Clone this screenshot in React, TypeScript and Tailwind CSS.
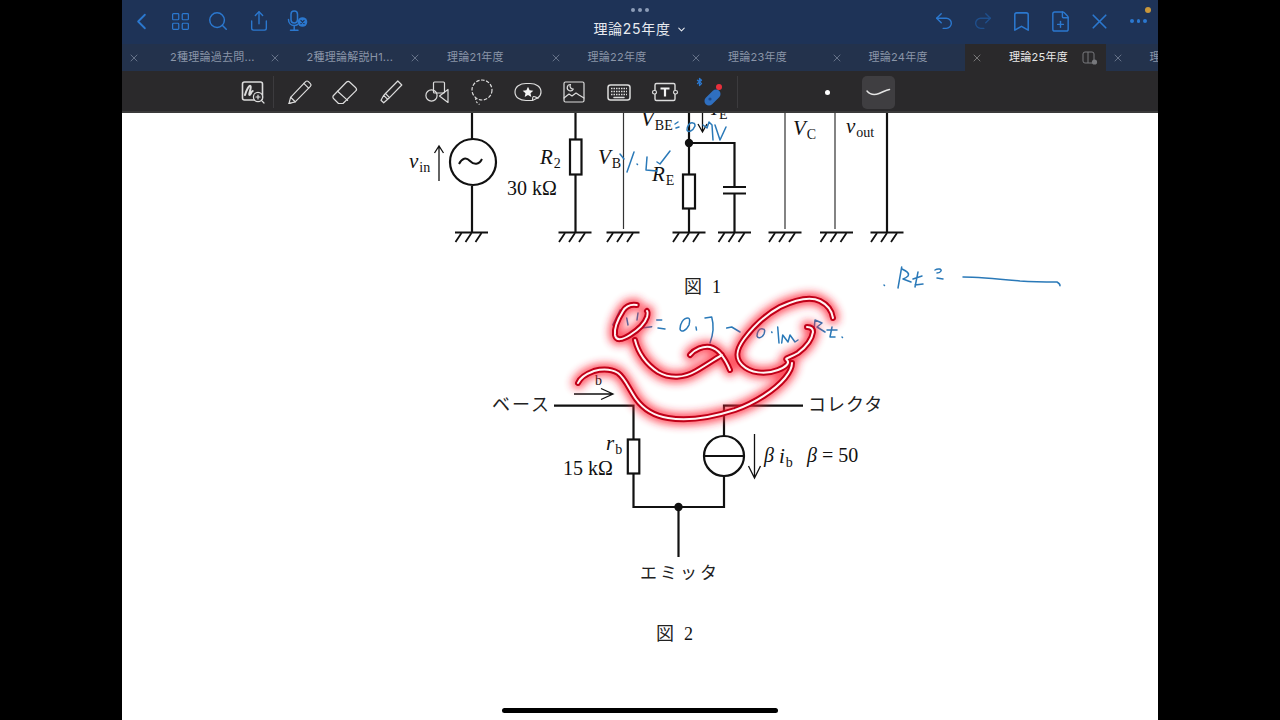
import { Bookmark, ChevronDown, ChevronLeft, FilePlus, LayoutGrid, Redo2, Search, Share, Undo2, X } from "lucide-react"

const tabs = [
  "2種理論過去問...",
  "2種理論解説H1...",
  "理論21年度",
  "理論22年度",
  "理論23年度",
  "理論24年度",
  "理論25年度",
  "理論",
]

function MicIcon() {
  return (
    <svg width="24" height="24" viewBox="0 0 24 24" fill="none" stroke="#2b78cf" strokeWidth="1.5" strokeLinecap="round">
      <rect x="5" y="2" width="6.5" height="12" rx="3.2" />
      <path d="M2.5 10.5c0 3.6 2.4 6 5.7 6 1.5 0 2.6-.4 3.6-1.2M8.2 16.5V21M4.5 21.2h7.5" />
      <circle cx="16.5" cy="13" r="4.8" fill="#2b78cf" stroke="none" />
      <path d="M14.9 11.4l3.2 3.2M18.1 11.4l-3.2 3.2" stroke="#1e3357" strokeWidth="1.2" />
    </svg>
  )
}

function TitleBar() {
  return (
    <div className="relative grid h-[44px] grid-cols-[1fr_auto_1fr] bg-[#1e3357] text-[#2b78cf]">
      <div className="flex items-start pt-[9px]">
        <Slot><ChevronLeft size={27} strokeWidth={1.6} /></Slot>
        <Slot><LayoutGrid size={21} strokeWidth={1.4} /></Slot>
        <div className="-ml-[2px] mr-[2px]"><Slot><Search size={22} strokeWidth={1.6} /></Slot></div>
        <Slot><Share size={22} strokeWidth={1.5} /></Slot>
        <Slot><MicIcon /></Slot>
      </div>
      <div className="flex flex-col items-center pt-[8px]">
        <div className="flex gap-[3px]">
          <span className="size-[4px] rounded-full bg-[#8d9db8]" />
          <span className="size-[4px] rounded-full bg-[#8d9db8]" />
          <span className="size-[4px] rounded-full bg-[#8d9db8]" />
        </div>
        <div className="mt-[7px] flex items-center gap-[5px] font-['Inter','Noto_Sans_CJK_JP',sans-serif] text-[14px] leading-[20px] tracking-[0.7px] text-[#e8ebf0]">
          理論25年度
          <ChevronDown size={11} strokeWidth={2.2} />
        </div>
      </div>
      <div className="flex items-start justify-end pt-[9px]">
        <Slot><Undo2 size={22} strokeWidth={1.5} /></Slot>
        <Slot><Redo2 size={22} strokeWidth={1.5} className="text-[#1f4f8c]" /></Slot>
        <Slot><Bookmark size={23} strokeWidth={1.6} /></Slot>
        <Slot><FilePlus size={23} strokeWidth={1.5} /></Slot>
        <Slot><X size={25} strokeWidth={1.6} /></Slot>
        <Slot>
          <div className="flex h-[24px] items-center gap-[3px]">
            <span className="size-[3.5px] rounded-full bg-[#2b78cf]" />
            <span className="size-[3.5px] rounded-full bg-[#2b78cf]" />
            <span className="size-[3.5px] rounded-full bg-[#2b78cf]" />
          </div>
        </Slot>
      </div>
      <span className="absolute right-[7px] top-[7px] size-[6px] rounded-full bg-[#c9973b]" />
    </div>
  )
}

function Slot({ children }: { children: React.ReactNode }) {
  return <div className="flex h-[24px] w-[39px] items-center justify-center">{children}</div>
}

function TabBar() {
  return (
    <div className="flex h-[27px] overflow-hidden bg-[#23324c] font-['Inter','Noto_Sans_CJK_JP',sans-serif] text-[11px] tracking-[0.25px]">
      {tabs.map((tab, i) => (
        <div
          key={tab}
          className={
            i === 6
              ? "flex w-[140.5px] shrink-0 items-center justify-between bg-[#2a292b] pl-[6px] pr-[8px] text-[#e8e8e8]"
              : "flex w-[140.5px] shrink-0 items-center pl-[6px] text-[#8a95a8]"
          }
        >
          <div className="flex items-center">
            <X size={12} strokeWidth={1.3} className={i === 6 ? "text-[#a0a0a0]" : "text-[#8a95a8]"} />
            <span className={i === 0 ? "ml-[30px] whitespace-nowrap" : "ml-[26px] whitespace-nowrap"}>{tab}</span>
          </div>
          {i === 6 && (
            <svg width="16" height="16" viewBox="0 0 16 16" fill="none" stroke="#77787c" strokeWidth="1">
              <rect x="1" y="2" width="11" height="11" rx="2" />
              <path d="M6 2v11" />
              <circle cx="12.5" cy="12" r="2.6" fill="#77787c" stroke="none" />
            </svg>
          )}
        </div>
      ))}
    </div>
  )
}

function ToolIcon({ children }: { children: React.ReactNode }) {
  return (
    <div className="flex h-[30px] w-[45.7px] shrink-0 items-center justify-center">
      <svg width="30" height="30" viewBox="0 0 30 30" fill="none" stroke="#dcdcdc" strokeWidth="1.2" strokeLinejoin="round" strokeLinecap="round">
        {children}
      </svg>
    </div>
  )
}

function Toolbar() {
  return (
    <div className="flex h-[42px] items-center border-b-2 border-[#3a3a3a] bg-[#2a292b] pl-[108px] pt-[2px]">
      <ToolIcon>
        <rect x="4.5" y="5" width="20" height="18" rx="2" strokeWidth="1.6" />
        <path d="M7 18c1.500-5 4-10 5.500-9 1.500 1-2.500 9-.8 9 1.200 0 1.600-4 3-4" strokeWidth="2" />
        <circle cx="20" cy="20" r="4.600" fill="#2a292b" />
        <path d="M18 20h4M20 18v4M23.500 23.500l2.500 2.500" />
      </ToolIcon>
      <div className="-ml-[3px] mr-[3px] h-[32px] w-0 border-l border-[#3c3b3e]" />
      <ToolIcon>
        <path d="M4 26.500l1.600-6.200L20.600 4.600c.8-.8 2-.8 2.800 0l2 2c.8.8.8 2 0 2.800L10.200 24.800z" />
        <path d="M5.600 20.300l4.600 4.500M18.800 6.400l4.800 4.800M4 26.500l2-.5" />
      </ToolIcon>
      <ToolIcon>
        <path d="M3.500 18.500L16.600 5c.9-.9 2.200-.9 3 0l6.200 5.800c.9.9.9 2.100 0 3L13 26.500H8.500l-5-5c-.8-.8-.8-2.200 0-3z" />
        <path d="M7.600 14.200l10 9.200" />
      </ToolIcon>
      <ToolIcon>
        <path d="M9.500 16.500L21.800 4l4 4L13.500 20.600z" />
        <path d="M9.500 16.500l-1.800 1.800 4 4 1.800-1.700M7.700 18.300l-2.700 4.900 2.700 2.600 4-3.500" />
      </ToolIcon>
      <ToolIcon>
        <rect x="11.500" y="5" width="11" height="11" rx="1" />
        <circle cx="9.500" cy="18.500" r="5.600" />
        <path d="M26 12.500v13l-8.500-6.500z" />
      </ToolIcon>
      <ToolIcon>
        <circle cx="15" cy="13" r="10" strokeDasharray="3.500 1.600" strokeLinecap="butt" />
        <path d="M9 21c-1 3 1 5 3.500 6.500" strokeDasharray="2 1.600" strokeLinecap="butt" />
      </ToolIcon>
      <ToolIcon>
        <path d="M19.500 23.500H13c-6 0-11-3-11-8.500s5-8.500 11-8.500h4c6 0 11 3 11 8.500 0 2.500-1 4.300-3 5.800z" />
        <path d="M19.500 23.500c0-2 0-3.800 1-4s2 .500 4.500 1.800" />
        <path d="M15 9.800l1.600 3.500 3.700.4-2.800 2.500.8 3.700-3.300-1.900-3.300 1.900.8-3.700-2.800-2.500 3.700-.4z" fill="#f4f4f4" stroke="none" />
      </ToolIcon>
      <ToolIcon>
        <rect x="5" y="5" width="20" height="20" rx="1.500" />
        <path d="M5 21l5-4 3 2 4-3 3 2 5 3" />
        <path d="M11.500 7.500a3.200 3.200 0 1 0 2.800 4.600 3 3 0 0 1-2.800-4.600z" />
      </ToolIcon>
      <ToolIcon>
        <rect x="4" y="8" width="22" height="15" rx="2.500" strokeWidth="1.500" />
        <path d="M7 11.500h16M7 14.500h16M7 17.500h16" strokeDasharray="1.500 1" strokeLinecap="butt" strokeWidth="1.600" />
        <path d="M10 20.500h10" strokeWidth="1.500" />
      </ToolIcon>
      <ToolIcon>
        <rect x="5" y="6.500" width="20" height="17" rx="1.500" strokeWidth="1.400" />
        <rect x="2.500" y="13.500" width="4" height="3.500" rx="1.800" fill="#2a292b" />
        <rect x="23.500" y="13.500" width="4" height="3.500" rx="1.800" fill="#2a292b" />
        <path d="M10.500 11.500h9M15 11.500v8" strokeWidth="2.200" stroke="#f2f2f2" strokeLinecap="butt" />
      </ToolIcon>
      <ToolIcon>
        <path d="M3.500 1.500v7M1.500 3.200L5.500 6.500 3.500 8.500V1.500l2 1.700L1.500 6.500" stroke="#2b78cf" strokeWidth="1.300" />
        <rect x="7" y="16" width="19" height="9" rx="4.500" transform="rotate(-45 16.500 20.500)" fill="#2f6fc0" stroke="none" />
        <circle cx="14" cy="22" r="1.600" fill="#1d4a8c" stroke="none" />
        <circle cx="23" cy="10" r="3" fill="#e8303c" stroke="none" />
      </ToolIcon>
      <div className="ml-[3px] h-[32px] w-0 border-l border-[#3c3b3e]" />
      <span className="ml-[87px] size-[5px] rounded-full bg-white" />
      <div className="ml-[32px] flex size-[33px] items-center justify-center rounded-[5px] bg-[#3f3e41]">
        <svg width="26" height="12" viewBox="0 0 26 12" fill="none">
          <path d="M2 5c3 3.500 8 4 12 2.500S21 4 24.500 3.500" stroke="#e4e4e4" strokeWidth="1.500" strokeLinecap="round" />
        </svg>
      </div>
    </div>
  )
}

function Ground({ x }: { x: number }) {
  return (
    <g stroke="#111" fill="none">
      <path d={`M${x - 16.5} 232.500H${x + 16.5}`} strokeWidth="2" />
      <path
        d={`M${x - 10} 233L${x - 16} 242M${x} 233L${x - 6} 242M${x + 10} 233L${x + 4} 242`}
        strokeWidth="1.800"
      />
    </g>
  )
}

const serif = "'Liberation Serif','Noto Sans CJK JP',serif"
const cjk = "'Noto Sans CJK JP',sans-serif"

function MathLabel({ x, y, main, sub }: { x: number; y: number; main: string; sub: string }) {
  return (
    <text x={x} y={y} fontFamily={serif} fontSize="21" fill="#111">
      <tspan fontStyle="italic">{main}</tspan>
      <tspan dx="1" dy="4" fontSize="14">{sub}</tspan>
    </text>
  )
}

function Figure1() {
  return (
    <g>
      <g stroke="#111" strokeWidth="2.200" fill="none">
        <path d="M472 113V139M472 186V233" />
        <circle cx="473" cy="162" r="23" />
        <path d="M459 164c3-6 7-7 11-3s9 4 12-2" strokeWidth="2" />
        <path d="M575.500 113V139M575.500 174V233" />
        <rect x="570" y="139.500" width="11.500" height="35" fill="#fff" />
        <path d="M689 113V174M689 209V233M689 143H734.500V187M734.500 193V233" />
        <rect x="683" y="174.500" width="12" height="34" fill="#fff" />
        <path d="M723 187H746M723 193.500H746" />
        <path d="M887 113V233" />
      </g>
      <path d="M623.500 113V229M785 113V229M835 113V229" stroke="#333" strokeWidth="1.200" />
      <path d="M439 181V146M434.500 153L439 146L443.500 153" stroke="#111" strokeWidth="1.300" fill="none" />
      <path d="M702.500 113V132M698 124L702.500 132L707 124" stroke="#111" strokeWidth="1.300" fill="none" />
      <circle cx="689" cy="143" r="4.200" fill="#111" />
      {[471.500, 575, 623, 689, 734.500, 785, 836.500, 887].map((x) => (
        <Ground key={x} x={x} />
      ))}
      <MathLabel x={409} y={168} main="v" sub="in" />
      <MathLabel x={540} y={164} main="R" sub="2" />
      <MathLabel x={598} y={164} main="V" sub="B" />
      <MathLabel x={641} y={126} main="V" sub="BE" />
      <MathLabel x={652} y={181} main="R" sub="E" />
      <MathLabel x={793} y={135} main="V" sub="C" />
      <MathLabel x={846} y={133} main="v" sub="out" />
      <MathLabel x={711} y={115} main="I" sub="E" />
      <text x={507} y={195} fontFamily={serif} fontSize="20" fill="#111">30 kΩ</text>
      <text x={684} y={293} fontFamily={cjk} fontSize="18" fill="#222">図</text>
      <text x={712} y={293} fontFamily={serif} fontSize="18" fill="#111">1</text>
    </g>
  )
}

function Figure2() {
  return (
    <g>
      <g stroke="#111" strokeWidth="2.200" fill="none">
        <path d="M554 405.700H633.500V439.500M633.500 473.500V507H724V476M724 436V405.700H803" />
        <rect x="627.800" y="439.500" width="11.500" height="34" fill="#fff" />
        <circle cx="724" cy="456" r="20" fill="#fff" />
        <path d="M704 456H744" />
        <path d="M678.500 507V557" />
      </g>
      <circle cx="678.500" cy="507" r="4.200" fill="#111" />
      <path d="M574 394H613M601 388.500L613 394L601 399.500" stroke="#111" strokeWidth="1.300" fill="none" />
      <path d="M754.500 434V478M748.500 466L754.500 478L760.500 466" stroke="#111" strokeWidth="1.300" fill="none" />
      <text x={595} y={385} fontFamily={serif} fontSize="14" fill="#111">b</text>
      <text x={492} y={411} fontFamily={cjk} fontSize="18" letterSpacing="2" fill="#222">ベース</text>
      <text x={808} y={411} fontFamily={cjk} fontSize="18" letterSpacing="1" fill="#222">コレクタ</text>
      <text x={640} y={579} fontFamily={cjk} fontSize="17" letterSpacing="3" fill="#222">エミッタ</text>
      <text x={656} y={640} fontFamily={cjk} fontSize="18" fill="#222">図</text>
      <text x={684} y={640} fontFamily={serif} fontSize="18" fill="#111">2</text>
      <MathLabel x={606} y={450} main="r" sub="b" />
      <text x={563} y={475} fontFamily={serif} fontSize="20" fill="#111">15 kΩ</text>
      <text x={764} y={462} fontFamily={serif} fontSize="20" fontStyle="italic" fill="#111">β</text>
      <MathLabel x={779} y={463} main="i" sub="b" />
      <text x={807} y={462} fontFamily={serif} fontSize="20" fill="#111">
        <tspan fontStyle="italic">β</tspan> = 50
      </text>
    </g>
  )
}

const laserStrokes = [
  "M636.700 305C630 304 626 306 623 311C618 319 614 328 615 335C616 341 622 340 630 335C638 330 645 323 647 317C648 313 648 312 647 311",
  "M635 340C638 352 646 364 658 372C670 379 684 378 696 371C708 364 718 357 722 355M690 355C695 349 703 346 710 347C719 349 725 358 730 370",
  "M833 318C832 311 828 305 820 301C810 296 795 300 780 307C765 315 753 327 744 339C736 350 735 358 742 365C750 373 765 375 778 370C786 367 790 363 787 360C784 358 790 358 798 353C806 347 812 339 813 332C813 328 810 327 807 327",
  "M578 383C580 378 586 374 594 371C602 369 611 369 618 373C625 378 629 389 636 399C644 410 655 416 668 418C685 421 710 418 735 410C755 403 775 390 785 378C790 372 792 368 792 363",
]

const inkStrokes = [
  // 上の書き込み
  "M675 124L678 122M676 128L679 127",
  "M693 123C689 122 687 127 687 130C688 133 693 131 695 126C695 124 694 123 693 123Z",
  "M703 125L707 128L709 122L712 125L713 140M715 125L720 140L726 127",
  "M620 154L624 159M634 152L627 172M637 164L637.500 164.500M647 157L646 170L657 171M657 162L660 164L670 151",
  // 右の書き込み
  "M884 285L884.500 285.500M901.700 267L898 288M902 269C906 271 910 273 908 276C906 278 903 279 903 279L911 282M913 279L922 276M918 272L915 287M915 285L923 284M935 270C938 268 942 269 941 271C940 273 938 273 937 273M937 278L943 279",
  "M963 277C975 277 990 278 1020 281C1035 282 1048 282 1057 282C1059 283 1060 284 1060 285.700",
  // r_b の式
  "M620 310L612.700 325M626.700 318L628 325M638 313L637 320M641.700 328L651.700 326.700M656.700 320L661.700 320M658 328L665 329",
  "M688 318C683 318 680 324 680 329C681 333 686 331 689 325C690 321 690 318 688 318Z",
  "M696 327L696.500 330M705 318L711.700 317C714 325 713 335 710 343",
  "M726.700 328L731.700 327L740 332",
  "M763 329C759 328 757 332 757 336C758 339 762 338 764 334C765 331 765 329 763 329Z",
  "M771.700 332L772 332.500M777.700 327L779 343M781.700 343L782.700 335L788 342L790 335L795 342L798 340",
  "M815 320L814 330M815 320L822 323L817 327L825 332M827 330L837 330M832 327L830 337L835 337M842 337L842.500 337.500",
]

function Notes() {
  return (
    <g fill="none" strokeLinecap="round" strokeLinejoin="round">
      <g stroke="#2a79b8" strokeWidth="1.500">
        {inkStrokes.map((d) => (
          <path key={d} d={d} />
        ))}
      </g>
      <g filter="url(#glow)" stroke="#ff2035" strokeWidth="12" opacity="0.8">
        {laserStrokes.map((d) => (
          <path key={d} d={d} />
        ))}
      </g>
      <g stroke="#c00018" strokeWidth="6">
        {laserStrokes.map((d) => (
          <path key={d} d={d} />
        ))}
      </g>
      <g stroke="#fff5f5" strokeWidth="2">
        {laserStrokes.map((d) => (
          <path key={d} d={d} />
        ))}
      </g>
    </g>
  )
}

function Page() {
  return (
    <div className="relative flex-1 overflow-hidden bg-white">
      <svg className="block" width="1036" height="607" viewBox="122 113 1036 607">
        <defs>
          <filter id="glow" x="-20%" y="-20%" width="140%" height="140%">
            <feGaussianBlur stdDeviation="4" />
          </filter>
        </defs>
        <Figure1 />
        <Figure2 />
        <Notes />
      </svg>
    </div>
  )
}

export default function App() {
  return (
    <div className="relative flex h-[720px] w-[1280px] justify-center overflow-hidden bg-black">
      <div className="flex w-[1036px] flex-col">
        <TitleBar />
        <TabBar />
        <Toolbar />
        <Page />
      </div>
      <div className="absolute bottom-[7px] left-[502px] h-[5px] w-[276px] rounded-full bg-black" />
    </div>
  )
}
